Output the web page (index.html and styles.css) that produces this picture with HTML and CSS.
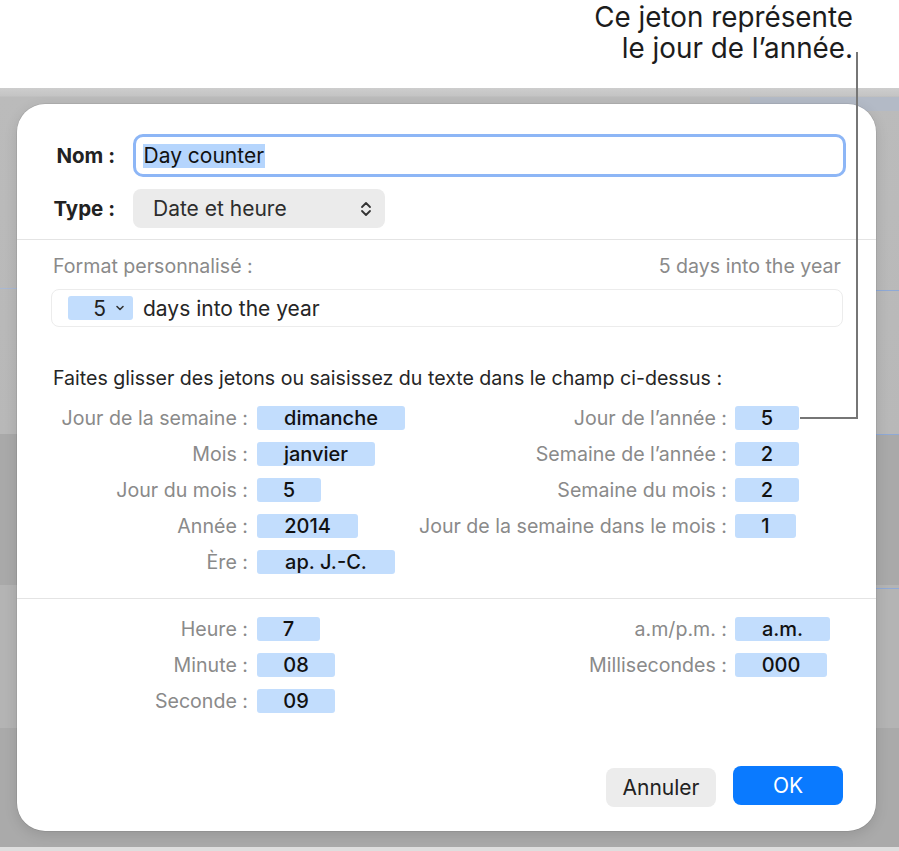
FILE: index.html
```html
<!DOCTYPE html>
<html lang="fr">
<head>
<meta charset="utf-8">
<title>Day counter</title>
<link rel="stylesheet" href="styles.css">
</head>
<body>
<div class="page">
  <div class="callout">
    <p class="callout-text">Ce jeton représente<br>le jour de l’année.</p>
  </div>
  <div class="backdrop">
    <div class="dialog">
      <div class="top-form">
        <label class="field-label">Nom :</label>
        <div class="name-input"><span class="selected">Day counter</span></div>
        <label class="field-label">Type :</label>
        <div class="popup">
          <span>Date et heure</span>
          <svg class="updown" width="12" height="18" viewBox="0 0 12 18"><path d="M2 7 L6 3 L10 7 M2 11 L6 15 L10 11" fill="none" stroke="#333" stroke-width="1.8" stroke-linecap="round" stroke-linejoin="round"/></svg>
        </div>
      </div>
      <hr class="sep">
      <div class="format-head">
        <span>Format personnalisé :</span>
        <span>5 days into the year</span>
      </div>
      <div class="format-field">
        <span class="fmt-token">5<svg class="caret" width="10" height="8" viewBox="0 0 10 8"><path d="M2 2.5 L5 5.5 L8 2.5" fill="none" stroke="#333" stroke-width="1.6" stroke-linecap="round" stroke-linejoin="round"/></svg></span>
        <span class="fmt-text">days into the year</span>
      </div>
      <p class="instructions">Faites glisser des jetons ou saisissez du texte dans le champ ci-dessus :</p>
      <div class="token-grid">
        <span class="lbl">Jour de la semaine :</span><span class="tok-cell"><span class="token" style="width:148px">dimanche</span></span>
        <span class="lbl r">Jour de l’année :</span><span class="tok-cell"><span class="token" style="width:64px">5</span></span>

        <span class="lbl">Mois :</span><span class="tok-cell"><span class="token" style="width:118px">janvier</span></span>
        <span class="lbl r">Semaine de l’année :</span><span class="tok-cell"><span class="token" style="width:64px">2</span></span>

        <span class="lbl">Jour du mois :</span><span class="tok-cell"><span class="token" style="width:64px">5</span></span>
        <span class="lbl r">Semaine du mois :</span><span class="tok-cell"><span class="token" style="width:64px">2</span></span>

        <span class="lbl">Année :</span><span class="tok-cell"><span class="token" style="width:101px">2014</span></span>
        <span class="lbl r">Jour de la semaine dans le mois :</span><span class="tok-cell"><span class="token" style="width:61px">1</span></span>

        <span class="lbl">Ère :</span><span class="tok-cell"><span class="token" style="width:138px">ap. J.-C.</span></span>
        <span class="lbl r"></span><span class="tok-cell"></span>
      </div>
      <hr class="sep sep-time">
      <div class="token-grid time-grid">
        <span class="lbl">Heure :</span><span class="tok-cell"><span class="token" style="width:63px">7</span></span>
        <span class="lbl r">a.m/p.m. :</span><span class="tok-cell"><span class="token" style="width:95px">a.m.</span></span>

        <span class="lbl">Minute :</span><span class="tok-cell"><span class="token" style="width:78px">08</span></span>
        <span class="lbl r">Millisecondes :</span><span class="tok-cell"><span class="token" style="width:92px">000</span></span>

        <span class="lbl">Seconde :</span><span class="tok-cell"><span class="token" style="width:78px">09</span></span>
        <span class="lbl r"></span><span class="tok-cell"></span>
      </div>
      <div class="buttons">
        <button class="btn btn-cancel">Annuler</button>
        <button class="btn btn-ok">OK</button>
      </div>
    </div>
  </div>
  <svg class="leader" width="899" height="851" viewBox="0 0 899 851"><path d="M857 52 L857 418 L800 418" fill="none" stroke="#767676" stroke-width="2"/></svg>
</div>
</body>
</html>
```

FILE: styles.css
```css
* { box-sizing: border-box; }
html, body { margin: 0; padding: 0; }
body {
  width: 899px;
  height: 851px;
  overflow: hidden;
  background: #fff;
  font-family: Inter, "Noto Sans", sans-serif;
  color: #1f1f1f;
}
.page { position: relative; width: 899px; height: 851px; }

.callout {
  height: 88px;
  display: flex;
  justify-content: flex-end;
  padding-right: 46px;
}
.callout-text {
  margin: 0;
  padding-top: 2px;
  text-align: right;
  font-size: 27.8px;
  line-height: 31px;
  color: #1c1c1c;
}

.backdrop {
  height: 763px;
  padding: 16px 23px 0 17px;
  background:
    linear-gradient(#8fa9d6, #8fa9d6) right 0 top 202px / 23px 1px no-repeat,
    linear-gradient(#8fa9d6, #8fa9d6) right 0 top 346px / 23px 1px no-repeat,
    linear-gradient(#8fa9d6, #8fa9d6) right 0 top 500px / 23px 1px no-repeat,
    linear-gradient(#a9b8d3, #a9b8d3) left 0 top 200px / 17px 1px no-repeat,
    linear-gradient(to right, transparent 0 750px, #b3bac6 750px 899px) left 0 top 9px / 100% 14px no-repeat,
    linear-gradient(to bottom,
      #cdcdcd 0px, #c4c4c4 8px, #bbbbbb 9px,
      #b8b8b8 346px, #a9a9a9 346px, #a9a9a9 497px,
      #b4b4b4 497px, #b4b4b4 640px,
      #aaaaaa 640px, #aaaaaa 759px, #dedede 759px);
}

.dialog {
  position: relative;
  width: 859px;
  height: 727px;
  background: #fff;
  border-radius: 28px;
  box-shadow: 0 0 0 0.5px rgba(0,0,0,0.12), 0 4px 14px rgba(0,0,0,0.12);
  padding-top: 30px;
}

.top-form {
  display: grid;
  grid-template-columns: 98px 1fr;
  column-gap: 18px;
  row-gap: 12px;
  align-items: center;
  padding-right: 30px;
}
.field-label {
  text-align: right;
  font-weight: 700;
  font-size: 20.5px;
  color: #222;
}
.name-input {
  height: 43px;
  border: 3.5px solid #8db6f6;
  border-radius: 10px;
  display: flex;
  align-items: center;
  padding-left: 6.5px;
}
.selected {
  background: #b5d5fd;
  font-size: 21px;
  line-height: 24px;
  color: #111;
  padding: 0 1px;
}
.popup {
  width: 252px;
  height: 39px;
  background: #ebebeb;
  border-radius: 8px;
  display: flex;
  align-items: center;
  justify-content: space-between;
  padding: 0 13px 0 20px;
  font-size: 21px;
  color: #2d2d2d;
}
.updown { display: block; }

.sep {
  margin: 0;
  border: 0;
  height: 1px;
  background: #e4e4e4;
}
.top-form + .sep { margin-top: 11px; }

.format-head {
  display: flex;
  justify-content: space-between;
  padding: 0 35px 0 36px;
  margin-top: 14px;
  height: 24px;
  align-items: center;
  font-size: 19.6px;
  color: #8a8a8a;
}
.format-field {
  margin: 11px 33px 0 34px;
  height: 38px;
  border: 1px solid #ececec;
  border-radius: 8px;
  display: flex;
  align-items: center;
  padding-left: 16px;
  gap: 10px;
}
.fmt-token {
  width: 65px;
  height: 24px;
  background: #c2ddfd;
  border-radius: 3px;
  display: flex;
  align-items: center;
  justify-content: flex-end;
  padding-right: 8px;
  gap: 9px;
  font-size: 21px;
  color: #222;
}
.caret { display: block; }
.fmt-text { font-size: 21px; color: #262626; }

.instructions {
  margin: 39px 0 0 36px;
  height: 24px;
  line-height: 24px;
  font-size: 19.6px;
  color: #262626;
}

.token-grid {
  margin-top: 10px;
  display: grid;
  grid-template-columns: 240px 160px 318px 141px;
  grid-auto-rows: 36px;
  align-items: center;
}
.lbl {
  text-align: right;
  padding-right: 9px;
  font-size: 19.6px;
  color: #8a8a8a;
  white-space: nowrap;
}
.lbl.r { padding-right: 8px; }
.tok-cell { display: flex; }
.token {
  display: flex;
  align-items: center;
  justify-content: center;
  height: 24px;
  background: #c2ddfd;
  border-radius: 3px;
  font-size: 20px;
  font-weight: 500;
  color: #111;
}

.sep-time { margin-top: 18px; }
.time-grid { margin-top: 12px; }

.buttons {
  display: flex;
  justify-content: flex-end;
  align-items: flex-end;
  gap: 17px;
  padding-right: 33px;
  margin-top: 47px;
}
.btn {
  border: 0;
  width: 110px;
  height: 39px;
  border-radius: 8px;
  font-family: Inter, "Noto Sans", sans-serif;
  font-size: 21px;
}
.btn-cancel { background: #ececec; color: #222; }
.btn-ok { background: #0a7aff; color: #fff; margin-bottom: 2px; }

.leader {
  position: absolute;
  left: 0;
  top: 0;
  pointer-events: none;
}
```
